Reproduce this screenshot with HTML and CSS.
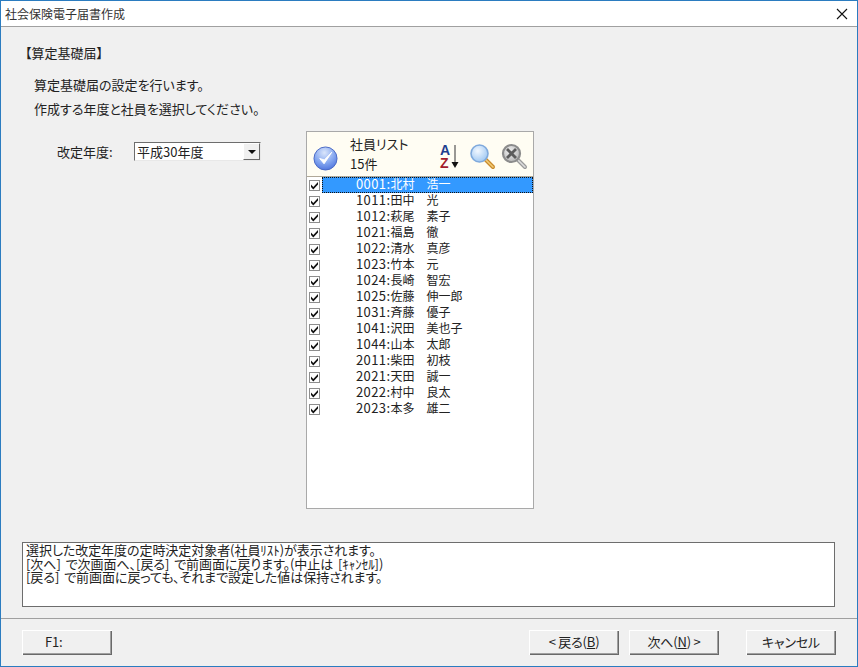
FILE: index.html
```html
<!DOCTYPE html>
<html lang="ja">
<head>
<meta charset="utf-8">
<title>社会保険電子届書作成</title>
<link rel="stylesheet" href="styles.css">
</head>
<body>
<svg class="defs" width="0" height="0" aria-hidden="true">
  <defs>
    <symbol id="tick" viewBox="0 0 9 9"><path d="M1 3.6 L3.3 6 L8 1 L8 3.4 L3.3 8.4 L1 6 Z" fill="#111"/></symbol>
    <radialGradient id="bluedisc" cx="45%" cy="25%" r="80%">
      <stop offset="0" stop-color="#dbe6fb"/><stop offset="0.55" stop-color="#86a8f0"/><stop offset="1" stop-color="#4a70dc"/>
    </radialGradient>
    <radialGradient id="glass" cx="40%" cy="35%" r="70%">
      <stop offset="0" stop-color="#f2f8ff"/><stop offset="1" stop-color="#9cc6f2"/>
    </radialGradient>
    <radialGradient id="greyglass" cx="40%" cy="35%" r="70%">
      <stop offset="0" stop-color="#efefef"/><stop offset="1" stop-color="#b5b5b5"/>
    </radialGradient>
  </defs>
</svg>
<div class="window">
  <header class="titlebar">
    <span class="title">社会保険電子届書作成</span>
    <svg class="close" width="12" height="12" viewBox="0 0 12 12"><path d="M1 1 L11 11 M11 1 L1 11" stroke="#111" stroke-width="1.1" fill="none"/></svg>
  </header>
  <main class="content">
    <h1 class="heading">【算定基礎届】</h1>
    <p class="intro">算定基礎届の設定を行います。</p>
    <p class="intro second">作成する年度と社員を選択してください。</p>
    <div class="columns">
      <div class="year-field">
        <span class="year-label">改定年度:</span>
        <div class="combo">
          <span class="combo-value">平成30年度</span>
          <span class="combo-button"><i class="combo-arrow"></i></span>
        </div>
      </div>
      <section class="panel">
        <div class="panel-head">
          <svg class="check-all" width="25" height="25" viewBox="0 0 26 26">
            <circle cx="13" cy="13" r="12" fill="url(#bluedisc)" stroke="#4a69c4"/>
            <path d="M7 13 L11.5 18.5 L19.5 6.5 L11.8 14.5 Z" fill="#fff" stroke="#fff" stroke-width="1" stroke-linejoin="round"/>
          </svg>
          <div class="panel-title"><div>社員リスト</div><div>15件</div></div>
          <div class="sort">
            <div class="sort-letters"><span class="sort-a">A</span><span class="sort-z">Z</span></div>
            <svg width="8" height="25" viewBox="0 0 8 25">
              <path d="M4 1 V19" stroke="#555" stroke-width="1.2"/>
              <path d="M0.5 18 H7.5 L4 24 Z" fill="#111"/>
            </svg>
          </div>
          <svg class="mag" width="27" height="27" viewBox="0 0 27 27">
            <path d="M16 16 L24 24" stroke="#c98a2c" stroke-width="4" stroke-linecap="round"/>
            <path d="M16 16 L24 24" stroke="#f3cd78" stroke-width="1.6" stroke-linecap="round"/>
            <circle cx="10.5" cy="10.5" r="8.5" fill="url(#glass)" stroke="#7fa9dc" stroke-width="1.6"/>
          </svg>
          <svg class="mag grey" width="27" height="27" viewBox="0 0 27 27">
            <path d="M16 16 L24 24" stroke="#9a9a9a" stroke-width="4" stroke-linecap="round"/>
            <path d="M16 16 L24 24" stroke="#dedede" stroke-width="1.6" stroke-linecap="round"/>
            <circle cx="10.5" cy="10.5" r="8.5" fill="url(#greyglass)" stroke="#8c8c8c" stroke-width="2.2"/>
            <path d="M6 6 L15 15 M15 6 L6 15" stroke="#5c5c5c" stroke-width="2.8"/>
          </svg>
        </div>
        <ul class="rows">
          <li class="row selected"><span class="box"><svg width="9" height="9"><use href="#tick"/></svg></span><span class="name"><span class="code">0001:</span>北村　浩一</span></li>
          <li class="row"><span class="box"><svg width="9" height="9"><use href="#tick"/></svg></span><span class="name"><span class="code">1011:</span>田中　光</span></li>
          <li class="row"><span class="box"><svg width="9" height="9"><use href="#tick"/></svg></span><span class="name"><span class="code">1012:</span>萩尾　素子</span></li>
          <li class="row"><span class="box"><svg width="9" height="9"><use href="#tick"/></svg></span><span class="name"><span class="code">1021:</span>福島　徹</span></li>
          <li class="row"><span class="box"><svg width="9" height="9"><use href="#tick"/></svg></span><span class="name"><span class="code">1022:</span>清水　真彦</span></li>
          <li class="row"><span class="box"><svg width="9" height="9"><use href="#tick"/></svg></span><span class="name"><span class="code">1023:</span>竹本　元</span></li>
          <li class="row"><span class="box"><svg width="9" height="9"><use href="#tick"/></svg></span><span class="name"><span class="code">1024:</span>長崎　智宏</span></li>
          <li class="row"><span class="box"><svg width="9" height="9"><use href="#tick"/></svg></span><span class="name"><span class="code">1025:</span>佐藤　伸一郎</span></li>
          <li class="row"><span class="box"><svg width="9" height="9"><use href="#tick"/></svg></span><span class="name"><span class="code">1031:</span>斉藤　優子</span></li>
          <li class="row"><span class="box"><svg width="9" height="9"><use href="#tick"/></svg></span><span class="name"><span class="code">1041:</span>沢田　美也子</span></li>
          <li class="row"><span class="box"><svg width="9" height="9"><use href="#tick"/></svg></span><span class="name"><span class="code">1044:</span>山本　太郎</span></li>
          <li class="row"><span class="box"><svg width="9" height="9"><use href="#tick"/></svg></span><span class="name"><span class="code">2011:</span>柴田　初枝</span></li>
          <li class="row"><span class="box"><svg width="9" height="9"><use href="#tick"/></svg></span><span class="name"><span class="code">2021:</span>天田　誠一</span></li>
          <li class="row"><span class="box"><svg width="9" height="9"><use href="#tick"/></svg></span><span class="name"><span class="code">2022:</span>村中　良太</span></li>
          <li class="row"><span class="box"><svg width="9" height="9"><use href="#tick"/></svg></span><span class="name"><span class="code">2023:</span>本多　雄二</span></li>
        </ul>
      </section>
    </div>
    <div class="help">
      <div>選択した改定年度の定時決定対象者(社員ﾘｽﾄ)が表示されます。</div>
      <div>[次へ] で次画面へ、[戻る] で前画面に戻ります。(中止は [ｷｬﾝｾﾙ])</div>
      <div>[戻る] で前画面に戻っても、それまで設定した値は保持されます。</div>
    </div>
  </main>
  <footer class="footer">
    <button class="btn f1">F1:</button>
    <span class="spacer"></span>
    <button class="btn">&lt; 戻る(<u>B</u>)</button>
    <button class="btn">次へ(<u>N</u>) &gt;</button>
    <button class="btn cancel">キャンセル</button>
  </footer>
</div>
</body>
</html>
```
FILE: styles.css
```css
* { box-sizing: border-box; }
html, body { margin: 0; height: 100%; }
body {
  width: 858px;
  height: 667px;
  overflow: hidden;
  font: 13px/16px "Noto Sans CJK JP", "Liberation Sans", sans-serif;
  font-feature-settings: "palt";
  color: #222;
  background: #f0f0f0;
}
.defs { position: absolute; }
.window {
  height: 667px;
  display: flex;
  flex-direction: column;
  border: 1px solid #2b7cc0;
  background: #f0f0f0;
}
.titlebar {
  height: 26px;
  flex: none;
  display: flex;
  align-items: center;
  justify-content: space-between;
  padding: 0 9px 0 4px;
  background: #fff;
  border-bottom: 1px solid #a0a0a0;
}
.title { color: #333; font-size: 12px; }
.content {
  flex: 1;
  padding: 17px 22px 0 21px;
  display: flex;
  flex-direction: column;
}
.heading {
  margin: 0 0 0 3px;
  font-size: 13px;
  font-weight: 400;
  line-height: 18px;
}
.intro { margin: 14px 0 0 12px; line-height: 18px; }
.intro.second { margin-top: 6px; }
.columns {
  display: flex;
  align-items: flex-start;
  margin-top: 13px;
  height: 411px;
}
.year-field {
  width: 284px;
  display: flex;
  align-items: center;
  margin-top: 11px;
  padding-left: 35px;
}
.year-label { width: 77px; }
.combo {
  width: 127px;
  height: 19px;
  display: flex;
  align-items: center;
  justify-content: space-between;
  background: #fff;
  border: 1px solid;
  border-color: #6d6d6d #e8e8e8 #e8e8e8 #6d6d6d;
  padding: 0 0 0 2px;
}
.combo-button {
  width: 17px;
  height: 17px;
  background: #f0f0f0;
  border: 1px solid;
  border-color: #fff #696969 #696969 #fff;
  display: flex;
  align-items: center;
  justify-content: center;
}
.combo-arrow {
  width: 0;
  height: 0;
  border: 4px solid transparent;
  border-top: 4px solid #111;
  border-bottom: 0;
}
.panel {
  width: 228px;
  height: 378px;
  display: flex;
  flex-direction: column;
  background: #fff;
  border: 1px solid #a9a9a9;
}
.panel-head {
  height: 45px;
  flex: none;
  display: flex;
  align-items: center;
  background: #fffdf3;
  border-bottom: 1px solid #b0a898;
  padding-left: 6px;
}
.check-all { margin-top: 8px; }
.panel-title { margin-left: 12px; width: 90px; line-height: 20px; margin-top: -1px; }
.sort { display: flex; margin-top: 5px; width: 19px; }
.sort-letters { width: 11px; display: flex; flex-direction: column; }
.sort-a, .sort-z { font: 700 14px/13px "Liberation Sans", sans-serif; }
.sort-a { color: #1f3f8f; }
.sort-z { color: #a31d2c; }
.mag { margin: 5px 0 0 10px; }
.mag.grey { margin-left: 5px; }
.rows { list-style: none; margin: 0; padding: 0; }
.row { display: flex; align-items: center; height: 16px; }
.box {
  width: 11px;
  height: 11px;
  margin-left: 2px;
  flex: none;
  border: 1px solid #8e8e8e;
  background: #fff;
  display: flex;
  align-items: center;
  justify-content: center;
}
.box svg { display: block; }
.name {
  flex: 1;
  height: 16px;
  margin-left: 2px;
  padding-left: 33px;
  white-space: pre;
  font-size: 12px;
  font-feature-settings: normal;
  line-height: 12px;
  border: 1px solid transparent;
}
.code { font-size: 13px; letter-spacing: .4px; }
.selected .name {
  background: #3399ff;
  color: #fff;
  border: 1px dotted #111;
}
.help {
  height: 65px;
  background: #fff;
  border: 1px solid #6d6d6d;
  padding: 0 3px;
  line-height: 13.5px;
  white-space: nowrap;
  word-spacing: 2px;
  letter-spacing: -.05px;
}
.footer {
  height: 48px;
  flex: none;
  margin-top: 11px;
  border-top: 1px solid #a0a0a0;
  display: flex;
  align-items: flex-start;
  padding: 11px 21px 0 21px;
  gap: 10px;
}
.spacer { flex: 1; }
.btn {
  width: 90px;
  height: 25px;
  padding: 0 0 1px;
  font: inherit;
  font-feature-settings: "palt";
  letter-spacing: -.2px;
  color: #222;
  background: #f0f0f0;
  border: 0;
  border-radius: 0;
  box-shadow: inset 1px 1px 0 #fff, inset -1px -1px 0 #696969, inset -2px -2px 0 #a0a0a0;
}
.btn.f1 { text-align: left; padding-left: 23px; }
.cancel { margin-left: 17px; }
```
